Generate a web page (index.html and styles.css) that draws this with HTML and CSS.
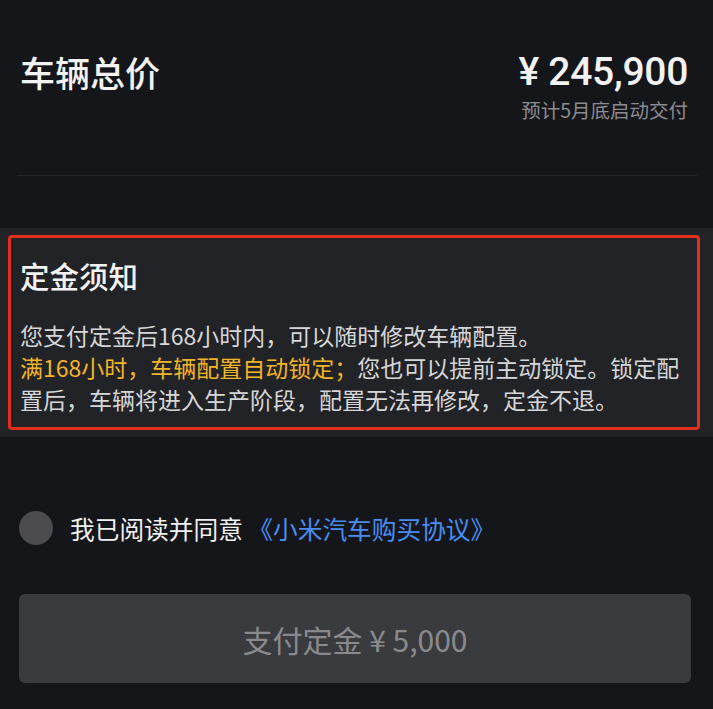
FILE: index.html
```html
<!DOCTYPE html>
<html lang="zh-CN">
<head>
  <meta charset="UTF-8" />
  <meta name="viewport" content="width=device-width, initial-scale=1.0" />
  <title>支付定金</title>
  <link rel="stylesheet" href="styles.css">
</head>
<body>
  <div class="total">
    <h1 class="total-title">车辆总价</h1>
    <div class="total-right">
      <div class="price">¥ 245,900</div>
      <div class="delivery">预计5月底启动交付</div>
    </div>
  </div>
  <div class="divider"></div>

  <div class="notice-wrap">
    <div class="notice">
      <h2 class="notice-title">定金须知</h2>
      <p class="notice-text">您支付定金后168小时内，可以随时修改车辆配置。<br /><span class="hl">满168小时，车辆配置自动锁定；</span>您也可以提前主动锁定。锁定配置后，车辆将进入生产阶段，配置无法再修改，定金不退。</p>
    </div>
  </div>

  <label class="agree">
    <span class="radio"></span>
    <span>我已阅读并同意 <a class="link" href="#">《小米汽车购买协议》</a></span>
  </label>

  <button class="pay" type="button">支付定金 ¥ 5,000</button>
</body>
</html>
```

FILE: styles.css
```css
body { margin: 0; background: #15161a; color: #f2f2f2; font-family: "Noto Sans CJK SC", "Noto Sans", sans-serif; width: 713px; height: 709px; overflow: hidden; }
.total { display: flex; justify-content: space-between; padding: 50px 25px 0 20px; }
.total-title { margin: 0; font-size: 35px; line-height: 44px; font-weight: 500; }
.total-right { text-align: right; }
.price { font-family: Roboto, "Noto Sans CJK SC", sans-serif; font-size: 39px; line-height: 44px; font-weight: 500; letter-spacing: -0.3px; }
.delivery { margin-top: 3px; font-size: 19.5px; line-height: 26px; color: #8b8b90; }
.divider { height: 1px; background: #26272b; margin: 52px 16px 0 17px; }
.notice-wrap { margin-top: 52px; background: #222326; padding: 7px 13px 7px 8px; }
.notice { border: 3px solid #e3301d; border-radius: 4px; padding: 19px 6px 12px 9px; }
.notice-title { margin: 0; font-size: 29.5px; line-height: 36px; font-weight: 500; }
.notice-text { margin: 26px 0 0; font-size: 23px; line-height: 32px; color: #d6d6d8; }
.hl { color: #f2b52a; }
.agree { display: flex; align-items: center; gap: 17px; margin: 73px 0 0 19px; height: 36px; font-size: 24.7px; color: #f0f0f0; }
.radio { width: 34px; height: 34px; border-radius: 50%; background: #4b4b50; }
.link { color: #4a8df2; text-decoration: none; }
.pay { display: block; margin: 48px 22px 0 19px; width: 672px; height: 89px; border: none; border-radius: 6px; background: #3a3b3f; color: #8a8a8c; font-family: "Noto Sans CJK SC", sans-serif; font-size: 30px; }
```
